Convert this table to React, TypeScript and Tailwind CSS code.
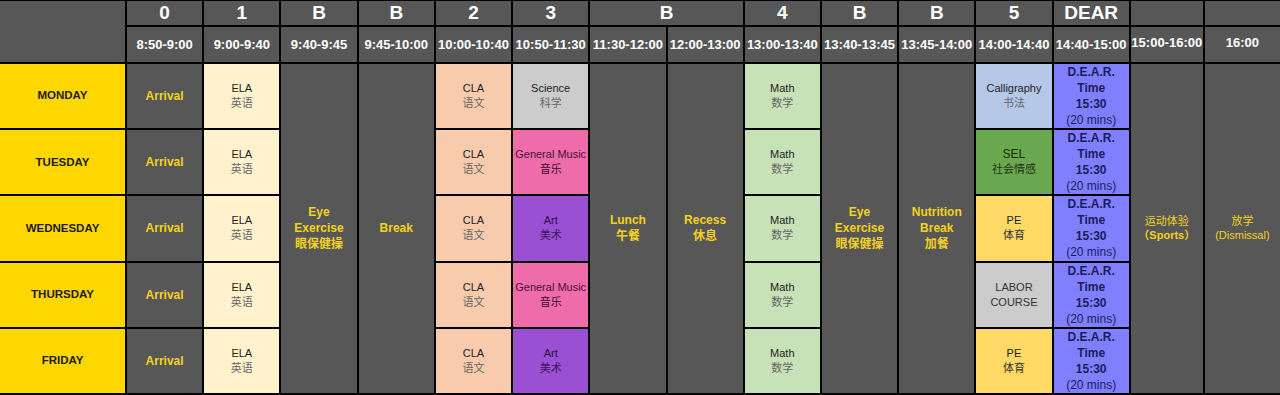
import React from "react";

const days = ["MONDAY", "TUESDAY", "WEDNESDAY", "THURSDAY", "FRIDAY"];

const times = [
	"8:50-9:00", "9:00-9:40", "9:40-9:45", "9:45-10:00", "10:00-10:40", "10:50-11:30",
	"11:30-12:00", "12:00-13:00", "13:00-13:40", "13:40-13:45", "13:45-14:00", "14:00-14:40",
	"14:40-15:00", "15:00-16:00", "16:00",
];

// period labels in the first header row, with how many columns each takes
const periods: { label: string; span: number }[] = [
	{ label: "0", span: 1 },
	{ label: "1", span: 1 },
	{ label: "B", span: 1 },
	{ label: "B", span: 1 },
	{ label: "2", span: 1 },
	{ label: "3", span: 1 },
	{ label: "B", span: 2 },
	{ label: "4", span: 1 },
	{ label: "B", span: 1 },
	{ label: "B", span: 1 },
	{ label: "5", span: 1 },
	{ label: "DEAR", span: 1 },
	{ label: "", span: 1 },
	{ label: "", span: 1 },
];

type Subject = { en: string; zh?: string; bg: string; en2?: string; enColor: string; zhColor: string };

const col3: Subject[] = [
	{ en: "Science", zh: "科学", bg: "bg-[#cccccc]", enColor: "text-[#222]", zhColor: "text-[#666]" },
	{ en: "General Music", zh: "音乐", bg: "bg-[#ef6cab]", enColor: "text-[#4a1030]", zhColor: "text-[#3a0c25]" },
	{ en: "Art", zh: "美术", bg: "bg-[#9b4fd2]", enColor: "text-[#2a0c45]", zhColor: "text-[#3a1760]" },
	{ en: "General Music", zh: "音乐", bg: "bg-[#ef6cab]", enColor: "text-[#4a1030]", zhColor: "text-[#3a0c25]" },
	{ en: "Art", zh: "美术", bg: "bg-[#9b4fd2]", enColor: "text-[#2a0c45]", zhColor: "text-[#3a1760]" },
];

const col5: Subject[] = [
	{ en: "Calligraphy", zh: "书法", bg: "bg-[#b5c8e8]", enColor: "text-[#222]", zhColor: "text-[#666]" },
	{ en: "SEL", zh: "社会情感", bg: "bg-[#6aa84f]", enColor: "text-[#1a2a12] text-[12px]", zhColor: "text-[#1f3317]" },
	{ en: "PE", zh: "体育", bg: "bg-[#ffd966]", enColor: "text-[#222]", zhColor: "text-[#333]" },
	{ en: "LABOR", en2: "COURSE", bg: "bg-[#cccccc]", enColor: "text-[#333]", zhColor: "text-[#333]" },
	{ en: "PE", zh: "体育", bg: "bg-[#ffd966]", enColor: "text-[#222]", zhColor: "text-[#333]" },
];

const dark = "bg-[#575757]";

const Cell = ({ s }: { s: Subject }) => (
	<div className={`${s.bg} flex flex-col items-center justify-center text-[11px] leading-[15px]`}>
		<span className={s.enColor}>{s.en}</span>
		{s.en2 && <span className={s.enColor}>{s.en2}</span>}
		{s.zh && <span className={s.zhColor}>{s.zh}</span>}
	</div>
);

const Simple = ({ en, zh, bg }: { en: string; zh: string; bg: string }) => (
	<Cell s={{ en, zh, bg, enColor: "text-[#222]", zhColor: "text-[#666]" }} />
);

const Tall = ({ col, lines }: { col: string; lines: string[] }) => (
	<div className={`${dark} ${col} row-start-3 row-span-5 flex flex-col items-center justify-center text-[12px] leading-[16px] font-bold text-[#f4d21f]`}>
		{lines.map((l, i) => <span key={i}>{l}</span>)}
	</div>
);

export default function App() {
	return (
		<div
			className="w-[1280px] h-[395px] bg-black pt-px pb-[2px] grid grid-cols-[125px_repeat(13,minmax(0,1fr))_72px_minmax(0,1fr)] grid-rows-[24px_35px_repeat(5,minmax(0,1fr))] gap-[2px] overflow-hidden"
			style={{ fontFamily: '"Liberation Sans", Arial, "Noto Sans CJK SC", sans-serif' }}
		>
			{/* top left corner */}
			<div className={`${dark} row-span-2 col-start-1 row-start-1`} />

			{periods.map((p, i) => (
				<div
					key={"p" + i}
					className={`${dark} row-start-1 flex items-center justify-center text-white font-bold text-[19px] ${p.span === 2 ? "col-span-2" : ""}`}
				>
					{p.label}
				</div>
			))}

			{times.map((t, i) => (
				<div
					key={"t" + i}
					className={`${dark} row-start-2 flex items-center justify-center text-white font-bold text-[13px] ${i >= 13 ? "pb-[4px]" : ""}`}
				>
					{t}
				</div>
			))}

			{days.map((d, r) => (
				<React.Fragment key={d}>
					<div className="bg-[#ffd700] col-start-1 flex items-center justify-center text-[11.5px] font-bold text-[#1c1c1c]" style={{ gridRowStart: r + 3 }}>
						{d}
					</div>
					<div className={`${dark} col-start-2 flex items-center justify-center text-[12px] font-bold text-[#f4d21f]`} style={{ gridRowStart: r + 3 }}>
						Arrival
					</div>
					<div className="col-start-3" style={{ gridRowStart: r + 3, display: "grid" }}>
						<Simple en="ELA" zh="英语" bg="bg-[#fff2cc]" />
					</div>
					<div className="col-start-6" style={{ gridRowStart: r + 3, display: "grid" }}>
						<Simple en="CLA" zh="语文" bg="bg-[#f8cbad]" />
					</div>
					<div className="col-start-7" style={{ gridRowStart: r + 3, display: "grid" }}>
						<Cell s={col3[r]} />
					</div>
					<div className="col-start-10" style={{ gridRowStart: r + 3, display: "grid" }}>
						<Simple en="Math" zh="数学" bg="bg-[#c8e2b8]" />
					</div>
					<div className="col-start-13" style={{ gridRowStart: r + 3, display: "grid" }}>
						<Cell s={col5[r]} />
					</div>
					<div
						className="col-start-14 bg-[#8080ff] flex flex-col items-center justify-center text-[12px] leading-[16px] text-[#1b1b5c]"
						style={{ gridRowStart: r + 3 }}
					>
						<span className="font-bold">D.E.A.R.</span>
						<span className="font-bold">Time</span>
						<span className="font-bold">15:30</span>
						<span>(20 mins)</span>
					</div>
				</React.Fragment>
			))}

			<Tall col="col-start-4" lines={["Eye", "Exercise", "眼保健操"]} />
			<Tall col="col-start-5" lines={["Break"]} />
			<Tall col="col-start-8" lines={["Lunch", "午餐"]} />
			<Tall col="col-start-9" lines={["Recess", "休息"]} />
			<Tall col="col-start-11" lines={["Eye", "Exercise", "眼保健操"]} />
			<Tall col="col-start-12" lines={["Nutrition", "Break", "加餐"]} />
			<div className={`${dark} col-start-15 row-start-3 row-span-5 flex flex-col items-center justify-center text-[11px] leading-[14px] text-[#f4d21f]`}>
				<span>运动体验</span>
				<span className="font-bold">（Sports）</span>
			</div>
			<div className={`${dark} col-start-16 row-start-3 row-span-5 flex flex-col items-center justify-center text-[11px] leading-[14px] text-[#f4d21f]`}>
				<span>放学</span>
				<span>(Dismissal)</span>
			</div>
		</div>
	);
}
